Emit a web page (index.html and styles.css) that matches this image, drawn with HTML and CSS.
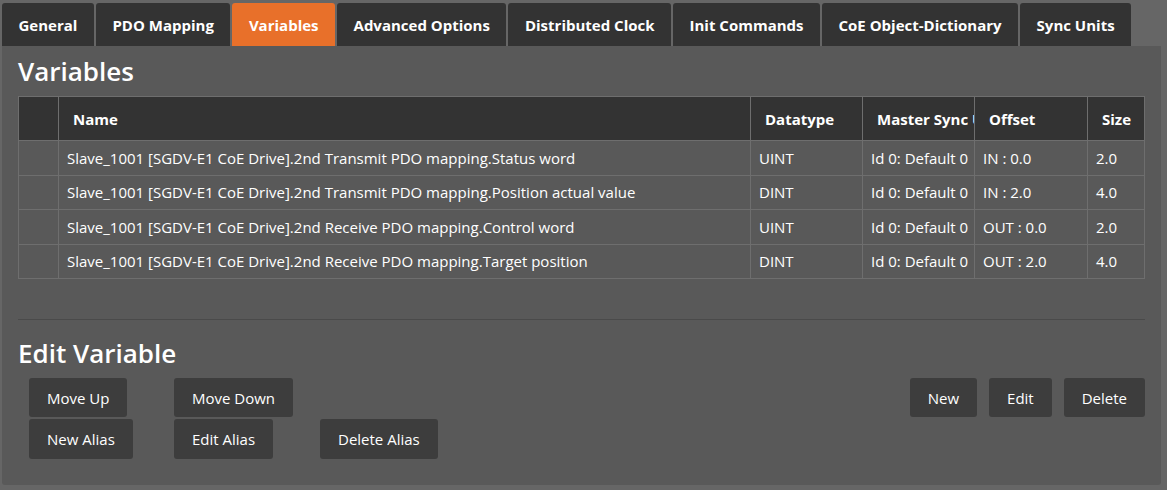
FILE: index.html
```html
<!DOCTYPE html>
<html>
<head>
<meta charset="utf-8">
<link rel="stylesheet" href="styles.css">
</head>
<body>
<div class="tabs">
  <div class="tab">General</div>
  <div class="tab">PDO Mapping</div>
  <div class="tab active">Variables</div>
  <div class="tab">Advanced Options</div>
  <div class="tab">Distributed Clock</div>
  <div class="tab">Init Commands</div>
  <div class="tab">CoE Object-Dictionary</div>
  <div class="tab">Sync Units</div>
</div>
<div class="panel">
  <h2 class="title">Variables</h2>
  <div class="table-wrap">
    <table class="grid">
      <colgroup>
        <col class="c-sel"><col class="c-name"><col class="c-type"><col class="c-sync"><col class="c-off"><col class="c-size">
      </colgroup>
      <thead>
        <tr><th></th><th>Name</th><th>Datatype</th><th>Master Sync Unit</th><th>Offset</th><th>Size</th></tr>
      </thead>
      <tbody>
        <tr><td></td><td>Slave_1001 [SGDV-E1 CoE Drive].2nd Transmit PDO mapping.Status word</td><td>UINT</td><td>Id 0: Default 0</td><td>IN : 0.0</td><td>2.0</td></tr>
        <tr><td></td><td>Slave_1001 [SGDV-E1 CoE Drive].2nd Transmit PDO mapping.Position actual value</td><td>DINT</td><td>Id 0: Default 0</td><td>IN : 2.0</td><td>4.0</td></tr>
        <tr><td></td><td>Slave_1001 [SGDV-E1 CoE Drive].2nd Receive PDO mapping.Control word</td><td>UINT</td><td>Id 0: Default 0</td><td>OUT : 0.0</td><td>2.0</td></tr>
        <tr><td></td><td>Slave_1001 [SGDV-E1 CoE Drive].2nd Receive PDO mapping.Target position</td><td>DINT</td><td>Id 0: Default 0</td><td>OUT : 2.0</td><td>4.0</td></tr>
      </tbody>
    </table>
  </div>
  <hr class="sep">
  <h2 class="title">Edit Variable</h2>
  <div class="edit-area">
    <div class="left-btns">
      <button class="btn">Move Up</button>
      <button class="btn">Move Down</button>
      <span></span>
      <button class="btn">New Alias</button>
      <button class="btn">Edit Alias</button>
      <button class="btn">Delete Alias</button>
    </div>
    <div class="right-btns">
      <button class="btn">New</button>
      <button class="btn">Edit</button>
      <button class="btn">Delete</button>
    </div>
  </div>
</div>
</body>
</html>
```

FILE: styles.css
```css
html, body {
  margin: 0;
  background: #666666;
}
body {
  padding: 3px 6px 0 2px;
  font-family: "Open Sans", "Noto Sans", sans-serif;
  color: #ffffff;
}
.tabs {
  display: flex;
  gap: 2px;
  height: 43px;
}
.tab {
  background: #333333;
  border-radius: 3px 3px 0 0;
  padding: 1px 16.5px 0 16.5px;
  font-size: 15px;
  font-weight: 700;
  line-height: 42px;
  white-space: nowrap;
}
.tab.active {
  background: #e8702a;
}
.panel {
  background: #595959;
  border-radius: 0 0 3px 3px;
  padding: 8px 16px 25px 16px;
  height: 439px;
  box-sizing: border-box;
}
.title {
  margin: 0;
  font-size: 26px;
  font-weight: 600;
  line-height: 34px;
}
.table-wrap {
  margin-top: 8px;
  height: 223px;
}
.grid {
  width: 100%;
  border-collapse: collapse;
  table-layout: fixed;
  font-size: 15px;
}
.c-sel { width: 40px; }
.c-type { width: 112px; }
.c-sync { width: 112px; }
.c-off { width: 113px; }
.c-size { width: 57px; }
.grid th, .grid td {
  border: 1px solid #6e6e6e;
  white-space: nowrap;
  overflow: hidden;
  text-align: left;
}
.grid th {
  background: #333333;
  height: 43px;
  padding: 0 0 0 14px;
  font-weight: 700;
}
.grid td {
  height: 33.5px;
  padding: 0 0 0 8px;
  font-weight: 400;
}
.sep {
  margin: 0;
  border: 0;
  border-top: 1px solid #4a4a4a;
}
.sep + .title {
  margin-top: 16px;
}
.edit-area {
  display: flex;
  justify-content: space-between;
  align-items: flex-start;
  margin-top: 8px;
}
.left-btns {
  display: grid;
  grid-template-columns: 145px 146px auto;
  row-gap: 2px;
  margin-left: 11px;
}
.left-btns .btn {
  justify-self: start;
}
.left-btns .btn:nth-child(n+4) {
  height: 40px;
}
.right-btns {
  display: flex;
  gap: 12px;
}
.btn {
  background: #3d3d3d;
  color: #ffffff;
  border: 0;
  border-radius: 3px;
  font-family: inherit;
  font-size: 15px;
  height: 39px;
  padding: 0 18px;
}
```
